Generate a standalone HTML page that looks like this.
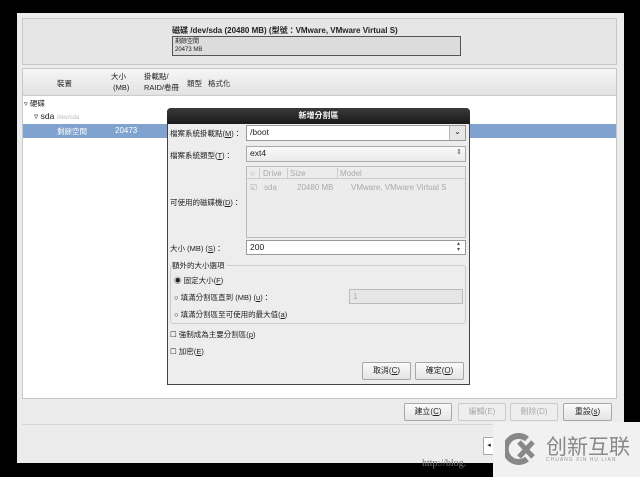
<!DOCTYPE html>
<html><head><meta charset="utf-8"><style>
*{margin:0;padding:0;box-sizing:border-box}
body{width:640px;height:477px;background:#000;position:relative;overflow:hidden;font-family:"Liberation Sans","Noto Sans CJK TC",sans-serif;font-size:8px;color:#222}
.a{position:absolute}
.btn{position:absolute;height:18px;border:1px solid #a8a8a8;border-radius:2px;background:linear-gradient(#fafafa,#e4e4e4);text-align:center;line-height:16px;font-size:8px}
.dis{color:#aaa;border-color:#ccc;background:#eee}
.inp{position:absolute;background:#fff;border:1px solid #999;height:15px;line-height:13px;padding-left:3px;font-size:8.5px}
.lbl{position:absolute;font-size:7.5px}
.g{position:absolute;color:#aaa;font-size:8px}
</style></head><body>
<div class="a" style="left:17px;top:13px;width:607px;height:450px;background:#ececec"></div>
<div class="a" style="left:22px;top:18px;width:595px;height:47px;background:#e6e6e6;border:1px solid #c8c8c8"></div>
<div class="a" style="left:172px;top:25px;font-size:8px;font-weight:bold">磁碟 /dev/sda (20480 MB) (型號：VMware, VMware Virtual S)</div>
<div class="a" style="left:172px;top:36px;width:289px;height:20px;background:#dcdcdc;border:1px solid #555;font-size:6px;line-height:8px;padding:1px 2px">剩餘空間<br>20473 MB</div>
<div class="a" style="left:22px;top:68px;width:595px;height:331px;background:#fff;border:1px solid #c8c8c8"></div>
<div class="a" style="left:23px;top:69px;width:593px;height:27px;background:linear-gradient(#f6f6f6,#e2e2e2);border-bottom:1px solid #ccc"></div>
<div class="lbl" style="left:57px;top:78px">裝置</div>
<div class="lbl" style="left:111px;top:71px;line-height:11px">大小<br>&nbsp;(MB)</div>
<div class="lbl" style="left:144px;top:71px;line-height:11px">掛載點/<br>RAID/卷冊</div>
<div class="lbl" style="left:187px;top:78px">類型</div>
<div class="lbl" style="left:208px;top:78px">格式化</div>
<div class="lbl" style="left:24px;top:98px">▿ 硬碟</div>
<div class="lbl" style="left:34px;top:111px;font-size:8.5px">▿ sda <span style="color:#bbb;font-size:6px">/dev/sda</span></div>
<div class="a" style="left:23px;top:124px;width:593px;height:14px;background:#7fa2cf"></div>
<div class="lbl" style="left:57px;top:126px;color:#fff">剩餘空間</div>
<div class="lbl" style="left:115px;top:126px;color:#fff;font-size:8px">20473</div>
<div class="btn" style="left:404px;top:403px;width:48px">建立(<u>C</u>)</div>
<div class="btn dis" style="left:458px;top:403px;width:48px">編輯(E)</div>
<div class="btn dis" style="left:510px;top:403px;width:48px">刪除(D)</div>
<div class="btn" style="left:563px;top:403px;width:49px">重設(<u>s</u>)</div>
<div class="a" style="left:22px;top:424px;width:595px;height:1px;background:#d6d6d6"></div>
<div class="a" style="left:483px;top:437px;width:12px;height:18px;background:#fff;border:1px solid #aaa;font-size:7px;line-height:16px;text-align:center">◂</div>
<div class="a" style="left:422px;top:458px;color:#777;font-family:'Liberation Serif',serif;font-size:10px">http://blog.</div>
<div class="a" style="left:493px;top:422px;width:147px;height:55px;background:#f1f1f1"></div>
<svg class="a" style="left:505px;top:433px" width="36" height="32" viewBox="0 0 36 32"><path d="M22 6A13 13 0 1 0 22 26" fill="none" stroke="#888" stroke-width="6"/><path d="M14 9L28 24M28 9L14 24" stroke="#888" stroke-width="5"/></svg>
<div class="a" style="left:546px;top:431px;font-size:21px;color:#888;letter-spacing:0px">创新互联</div>
<div class="a" style="left:546px;top:457px;font-size:5px;color:#999;letter-spacing:1px">CHUANG XIN HU LIAN</div>
<div class="a" style="left:167px;top:108px;width:303px;height:277px;background:#ededed;border:1px solid #444;border-radius:4px 4px 0 0"></div>
<div class="a" style="left:167px;top:108px;width:303px;height:16px;background:linear-gradient(#3a3a3a,#1a1a1a);border-radius:4px 4px 0 0;color:#fff;text-align:center;line-height:16px;font-size:8px;font-weight:bold">新增分割區</div>
<div class="lbl" style="left:170px;top:128px">檔案系統掛載點(<u>M</u>)：</div>
<div class="inp" style="left:246px;top:125px;width:220px;height:16px">/boot</div>
<div class="a" style="left:449px;top:126px;width:16px;height:14px;background:#e6e6e6;border-left:1px solid #bbb;text-align:center;font-size:8px;line-height:12px">⌄</div>
<div class="lbl" style="left:170px;top:150px">檔案系統類型(<u>T</u>)：</div>
<div class="inp" style="left:246px;top:146px;width:220px;height:16px;background:linear-gradient(#fafafa,#eaeaea);border-color:#aaa">ext4</div>
<div class="a" style="left:456px;top:148px;font-size:7px;color:#555">⇕</div>
<div class="a" style="left:246px;top:166px;width:220px;height:72px;background:#ececec;border:1px solid #bbb"></div>
<div class="a" style="left:247px;top:167px;width:218px;height:12px;border-bottom:1px solid #ccc"></div>
<div class="g" style="left:250px;top:169px">○</div>
<div class="a" style="left:259px;top:168px;width:1px;height:10px;background:#ccc"></div>
<div class="g" style="left:263px;top:169px">Drive</div>
<div class="a" style="left:287px;top:168px;width:1px;height:10px;background:#ccc"></div>
<div class="g" style="left:290px;top:169px">Size</div>
<div class="a" style="left:337px;top:168px;width:1px;height:10px;background:#ccc"></div>
<div class="g" style="left:340px;top:169px">Model</div>
<div class="g" style="left:250px;top:183px">☑</div>
<div class="g" style="left:264px;top:183px">sda</div>
<div class="g" style="left:297px;top:183px">20480 MB</div>
<div class="g" style="left:351px;top:183px">VMware, VMware Virtual S</div>
<div class="lbl" style="left:170px;top:197px">可使用的磁碟機(<u>D</u>)：</div>
<div class="lbl" style="left:170px;top:243px">大小 (MB) (<u>S</u>)：</div>
<div class="inp" style="left:246px;top:240px;width:220px;height:15px">200</div>
<div class="a" style="left:457px;top:241px;font-size:6px;color:#555;line-height:6px">▴<br>▾</div>
<div class="a" style="left:170px;top:265px;width:296px;height:59px;border:1px solid #ccc;border-radius:3px"></div>
<div class="lbl" style="left:172px;top:260px;background:#ededed;padding-right:2px">額外的大小選項</div>
<div class="lbl" style="left:174px;top:275px">◉&nbsp;固定大小(<u>F</u>)</div>
<div class="lbl" style="left:174px;top:292px">○&nbsp;填滿分割區直到 (MB) (<u>u</u>)：</div>
<div class="a" style="left:349px;top:289px;width:114px;height:15px;background:#e6e6e6;border:1px solid #bbb;color:#aaa;font-size:8px;line-height:13px;padding-left:3px">1</div>
<div class="lbl" style="left:174px;top:309px">○&nbsp;填滿分割區至可使用的最大值(<u>a</u>)</div>
<div class="lbl" style="left:170px;top:329px">☐&nbsp;強制成為主要分割區(<u>p</u>)</div>
<div class="lbl" style="left:170px;top:346px">☐&nbsp;加密(<u>E</u>)</div>
<div class="btn" style="left:362px;top:362px;width:49px">取消(<u>C</u>)</div>
<div class="btn" style="left:415px;top:362px;width:49px">確定(<u>O</u>)</div>
</body></html>
